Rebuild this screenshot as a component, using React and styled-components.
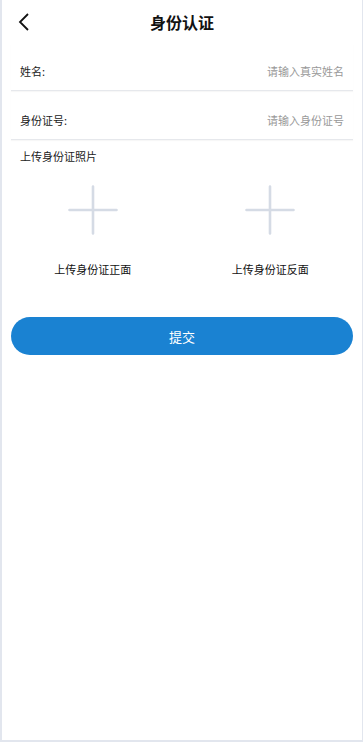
import styled, { createGlobalStyle } from 'styled-components';

const GlobalStyle = createGlobalStyle`
  html, body {
    margin: 0;
    padding: 0;
    background: #e2e6ee;
  }
  body {
    font-family: "Noto Sans CJK SC", "Noto Sans", sans-serif;
  }
`;

const Page = styled.div`
  margin: 0 1px 0 2px;
  height: 740px;
  background: #fff;
  display: flex;
  flex-direction: column;
`;

const Header = styled.header`
  position: relative;
  height: 44px;
  display: flex;
  align-items: center;
  justify-content: center;
`;

const Back = styled.button`
  position: absolute;
  left: 10px;
  top: 10px;
  width: 24px;
  height: 24px;
  padding: 0;
  border: 0;
  background: none;
  display: flex;
  align-items: center;
  justify-content: center;
`;

const Title = styled.h1`
  margin: 0;
  font-size: 16px;
  font-weight: 700;
  color: #111;
`;

const Form = styled.div`
  padding: 0 9px 0 9px;
`;

const Row = styled.div`
  height: ${(p) => p.$h}px;
  box-sizing: border-box;
  display: flex;
  align-items: flex-end;
  justify-content: space-between;
  padding: 0 9px 10px;
  border-bottom: 1px solid #e6e8ec;
  box-shadow: 0 1px 1px rgba(0, 0, 0, 0.03);
`;

const Label = styled.span`
  font-size: 11px;
  line-height: 17px;
  color: #222;
`;

const Input = styled.input`
  border: 0;
  outline: none;
  text-align: right;
  font-family: inherit;
  font-size: 11px;
  line-height: 17px;
  color: #333;
  width: 160px;
  padding: 0;
  &::placeholder {
    color: #999;
  }
`;

const SectionTitle = styled.div`
  font-size: 11px;
  line-height: 17px;
  color: #222;
  padding: 8px 9px 0;
`;

const Uploads = styled.div`
  display: grid;
  grid-template-columns: 1fr 1fr;
  margin: 0 -6px 0 -7px;
  padding-top: 20px;
`;

const Upload = styled.div`
  display: flex;
  flex-direction: column;
  align-items: center;
`;

const PlusBox = styled.div`
  width: 50px;
  height: 50px;
  display: flex;
  align-items: center;
  justify-content: center;
`;

const UploadLabel = styled.div`
  margin-top: 26px;
  font-size: 11px;
  line-height: 16px;
  color: #111;
`;

const Submit = styled.button`
  display: block;
  width: 100%;
  height: 38px;
  margin-top: 40px;
  border: 0;
  border-radius: 19px;
  background: #1a82d2;
  color: #fff;
  font-family: inherit;
  font-size: 13px;
`;

function Plus() {
  return (
    <svg width="50" height="50" viewBox="0 0 50 50">
      <path d="M25 1.5v47M1.5 25h47" stroke="#d5dbe5" strokeWidth="2.6" strokeLinecap="round" />
    </svg>
  );
}

export default function App() {
  return (
    <>
      <GlobalStyle />
      <Page>
        <Header>
          <Back aria-label="back">
            <svg width="14" height="20" viewBox="0 0 14 20">
              <path d="M11 2L3 10l8 8" fill="none" stroke="#111" strokeWidth="1.8" />
            </svg>
          </Back>
          <Title>身份认证</Title>
        </Header>
        <Form>
          <Row $h={47}>
            <Label>姓名:</Label>
            <Input placeholder="请输入真实姓名" />
          </Row>
          <Row $h={49}>
            <Label>身份证号:</Label>
            <Input placeholder="请输入身份证号" />
          </Row>
          <SectionTitle>上传身份证照片</SectionTitle>
          <Uploads>
            <Upload>
              <PlusBox>
                <Plus />
              </PlusBox>
              <UploadLabel>上传身份证正面</UploadLabel>
            </Upload>
            <Upload>
              <PlusBox>
                <Plus />
              </PlusBox>
              <UploadLabel>上传身份证反面</UploadLabel>
            </Upload>
          </Uploads>
          <Submit>提交</Submit>
        </Form>
      </Page>
    </>
  );
}
